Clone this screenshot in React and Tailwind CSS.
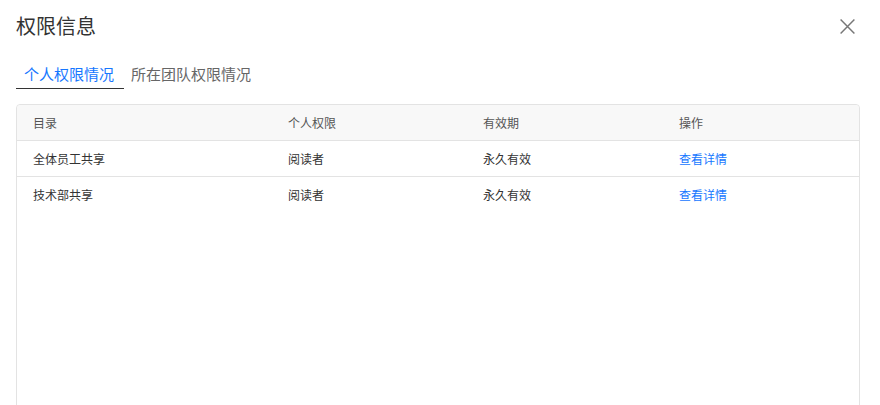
const rows = [
  { dir: "全体员工共享", role: "阅读者", expire: "永久有效" },
  { dir: "技术部共享", role: "阅读者", expire: "永久有效" },
];

const cols = "grid grid-cols-[255px_195px_196px_1fr]";

export default function App() {
  return (
    <div
      className="h-[405px] w-[880px] overflow-hidden bg-white"
      style={{ fontFamily: '"Noto Sans CJK SC", "Noto Sans", sans-serif' }}
    >
      <div className="flex items-center justify-between pl-4 pr-[24px] pt-[11px]">
        <h2 className="text-[20px] leading-[30px] text-[#333]">权限信息</h2>
        <svg width="17" height="17" viewBox="0 0 16 16" className="text-[#777]">
          <path d="M1.5 1.5L14.5 14.5M14.5 1.5L1.5 14.5" stroke="currentColor" strokeWidth="1.4" />
        </svg>
      </div>

      <div className="mt-[22px] flex px-4 text-[15px]">
        <div className="border-b-[1.5px] border-[#333] pb-[3px] pl-2 pr-[10px] leading-[22px] text-[#1677ff]">
          个人权限情况
        </div>
        <div className="px-[7px] leading-[22px] text-[#666]">所在团队权限情况</div>
      </div>

      <div className="ml-4 mr-5 mt-[15px] h-[320px] rounded-t-[4px] border border-[#e3e3e3] text-[12px] text-[#333]">
        <div className={`${cols} h-[36px] items-center rounded-t-[4px] border-b border-[#e3e3e3] bg-[#f8f8f8] text-[#555]`}>
          <div className="pl-4">目录</div>
          <div className="pl-4">个人权限</div>
          <div className="pl-4">有效期</div>
          <div className="pl-4">操作</div>
        </div>
        {rows.map((r, i) => (
          <div
            key={r.dir}
            className={`${cols} h-[36px] items-center ${i === 0 ? "border-b border-[#e3e3e3]" : ""}`}
          >
            <div className="pl-4">{r.dir}</div>
            <div className="pl-4">{r.role}</div>
            <div className="pl-4">{r.expire}</div>
            <div className="pl-4 text-[#1677ff]">查看详情</div>
          </div>
        ))}
      </div>
    </div>
  );
}
